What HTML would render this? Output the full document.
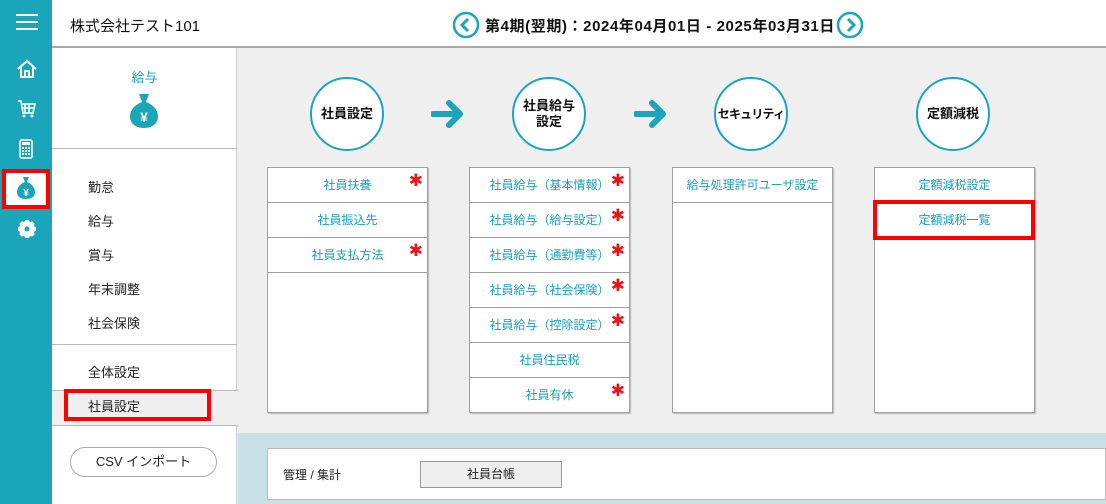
<!DOCTYPE html>
<html><head><meta charset="utf-8"><style>
*{box-sizing:border-box;margin:0;padding:0}
body{width:1106px;height:504px;overflow:hidden;background:#efefef;font-family:"Liberation Sans","Noto Sans CJK JP",sans-serif;position:relative;font-size:13px;color:#222}
.a{position:absolute}
#side{left:0;top:0;width:52px;height:504px;background:#1aa5ba}
#hdr{left:52px;top:0;width:1054px;height:48px;background:#fff;border-bottom:2px solid #a8a8a8}
#left{left:52px;top:48px;width:185px;height:456px;background:#fff;border-right:1px solid #ccc}
.mi{position:absolute;left:36px;font-size:13px;color:#222}
.circ{position:absolute;width:74px;height:74px;border:2px solid #1aa5ba;border-radius:50%;background:#fff;display:flex;align-items:center;justify-content:center;text-align:center;font-weight:bold;font-size:13px;line-height:16px;color:#111;white-space:nowrap}
.box{position:absolute;top:167px;width:161px;height:246px;background:#fff;border:1px solid #a0a0a0;box-shadow:1px 1px 1px #bbb}
.row{height:35px;border-bottom:1px solid #a0a0a0;color:#1aa0b8;font-size:12px;text-align:center;line-height:34px;position:relative}
.st{position:absolute;right:4px;top:-4px;color:#e8141a;font-size:17px;font-family:"DejaVu Sans",sans-serif}
.arr{position:absolute;top:98px}
</style></head><body>
<div id="side" class="a">
 <svg class="a" style="left:16px;top:13px" width="22" height="18"><g stroke="#fff" stroke-width="2"><line x1="0" y1="2" x2="22" y2="2"/><line x1="0" y1="9" x2="22" y2="9"/><line x1="0" y1="16" x2="22" y2="16"/></g></svg>
 <svg class="a" style="left:16px;top:59px" width="22" height="20"><path d="M2 10 L11 2 L20 10 M5 8 V18 H17 V8 M9 18 V12 H13 V18" fill="none" stroke="#fff" stroke-width="2"/></svg>
 <svg class="a" style="left:17px;top:99px" width="20" height="20"><path d="M1 2 H4 L6 14 H16 L18 5 H5 M8 5 V14 M12 5 V14 M5 9 H17" fill="none" stroke="#fff" stroke-width="1.6"/><circle cx="7" cy="17" r="1.5" fill="#fff"/><circle cx="15" cy="17" r="1.5" fill="#fff"/></svg>
 <svg class="a" style="left:19px;top:139px" width="14" height="20"><rect x="1" y="1" width="12" height="18" rx="1.5" fill="none" stroke="#fff" stroke-width="1.5"/><rect x="3" y="3" width="8" height="3" fill="#fff"/><g fill="#fff"><rect x="3" y="8" width="2" height="2"/><rect x="6" y="8" width="2" height="2"/><rect x="9" y="8" width="2" height="2"/><rect x="3" y="11" width="2" height="2"/><rect x="6" y="11" width="2" height="2"/><rect x="9" y="11" width="2" height="2"/><rect x="3" y="14" width="2" height="2"/><rect x="6" y="14" width="2" height="2"/><rect x="9" y="14" width="2" height="2"/></g></svg>
 <div class="a" style="left:2px;top:169px;width:48px;height:40px;background:#fff;border:4px solid #f00"></div>
 <svg class="a" style="left:16px;top:176px" width="20" height="24"><path d="M7 1 H13 L11 6 C17 8 19 13 19 16 C19 21 15 23 10 23 C5 23 1 21 1 16 C1 13 3 8 9 6 Z" fill="#1aa5ba"/><text x="10" y="20" fill="#fff" font-size="10" font-weight="bold" text-anchor="middle" font-family="Liberation Sans">¥</text></svg>
 <svg class="a" style="left:17px;top:219px" width="20" height="20" viewBox="0 0 20 20"><circle cx="10" cy="10" r="6" fill="none" stroke="#fff" stroke-width="4"/><g stroke="#fff" stroke-width="4"><line x1="10" y1="1" x2="10" y2="19"/><line x1="1" y1="10" x2="19" y2="10"/><line x1="3.6" y1="3.6" x2="16.4" y2="16.4"/><line x1="16.4" y1="3.6" x2="3.6" y2="16.4"/></g><circle cx="10" cy="10" r="2.5" fill="#1aa5ba"/></svg>
</div>
<div id="hdr" class="a">
 <div class="a" style="left:18px;top:15px;font-size:15px;color:#111">株式会社テスト101</div>
 <svg class="a" style="left:400px;top:11px" width="28" height="28"><circle cx="14" cy="14" r="12" fill="#fff" stroke="#1aa5ba" stroke-width="2.5"/><path d="M16 8 L10 14 L16 20" fill="none" stroke="#1aa5ba" stroke-width="3"/></svg>
 <div class="a" style="left:433px;top:15px;font-size:15px;letter-spacing:0.6px;font-weight:bold;color:#111;white-space:nowrap">第4期(翌期)：2024年04月01日 - 2025年03月31日</div>
 <svg class="a" style="left:784px;top:11px" width="28" height="28"><circle cx="14" cy="14" r="12" fill="#fff" stroke="#1aa5ba" stroke-width="2.5"/><path d="M12 8 L18 14 L12 20" fill="none" stroke="#1aa5ba" stroke-width="3"/></svg>
</div>
<div id="left" class="a">
 <div class="a" style="left:0;width:185px;top:19px;text-align:center;color:#1aa0b8;font-size:13px">給与</div>
 <svg class="a" style="left:77px;top:45px" width="30" height="36"><path d="M10 1 H20 L17 9 C25 12 29 18 29 23 C29 31 23 35 15 35 C7 35 1 31 1 23 C1 18 5 12 13 9 Z" fill="#1aa5ba"/><text x="15" y="29" fill="#fff" font-size="14" font-weight="bold" text-anchor="middle" font-family="Liberation Sans">¥</text></svg>
 <div class="a" style="left:0;top:100px;width:185px;border-top:1px solid #bbb"></div>
 <div class="mi" style="top:129px">勤怠</div>
 <div class="mi" style="top:163px">給与</div>
 <div class="mi" style="top:197px">賞与</div>
 <div class="mi" style="top:231px">年末調整</div>
 <div class="mi" style="top:265px">社会保険</div>
 <div class="a" style="left:0;top:296px;width:185px;border-top:1px solid #bbb"></div>
 <div class="mi" style="top:314px">全体設定</div>
 <div class="a" style="left:0;top:342px;width:186px;height:36px;background:#efefef;border-top:1px solid #bbb;border-bottom:1px solid #bbb"></div>
 <div class="a" style="left:12px;top:341px;width:147px;height:32px;border:4px solid #f00"></div>
 <div class="mi" style="top:348px">社員設定</div>
 <div class="a" style="left:18px;top:399px;width:147px;height:30px;border:1px solid #aaa;border-radius:15px;text-align:center;line-height:28px;font-size:13px">CSV インポート</div>
</div>
<div class="circ" style="left:310px;top:77px">社員設定</div>
<div class="circ" style="left:512px;top:77px">社員給与<br>設定</div>
<div class="circ" style="left:714px;top:77px;font-size:12px;letter-spacing:-0.8px">セキュリティ</div>
<div class="circ" style="left:916px;top:77px">定額減税</div>
<svg class="arr" style="left:431px" width="34" height="32"><path d="M2 16 H28 M18 5 L29 16 L18 27" fill="none" stroke="#1aa5ba" stroke-width="6" stroke-linecap="round" stroke-linejoin="round"/></svg>
<svg class="arr" style="left:634px" width="34" height="32"><path d="M2 16 H28 M18 5 L29 16 L18 27" fill="none" stroke="#1aa5ba" stroke-width="6" stroke-linecap="round" stroke-linejoin="round"/></svg>
<div class="box" style="left:267px">
 <div class="row">社員扶養<span class="st">✱</span></div>
 <div class="row">社員振込先</div>
 <div class="row">社員支払方法<span class="st">✱</span></div>
</div>
<div class="box" style="left:469px">
 <div class="row">社員給与（基本情報）<span class="st">✱</span></div>
 <div class="row">社員給与（給与設定）<span class="st">✱</span></div>
 <div class="row">社員給与（通勤費等）<span class="st">✱</span></div>
 <div class="row">社員給与（社会保険）<span class="st">✱</span></div>
 <div class="row">社員給与（控除設定）<span class="st">✱</span></div>
 <div class="row">社員住民税</div>
 <div class="row" style="border-bottom:none">社員有休<span class="st">✱</span></div>
</div>
<div class="box" style="left:672px">
 <div class="row">給与処理許可ユーザ設定</div>
</div>
<div class="box" style="left:874px">
 <div class="row">定額減税設定</div>
 <div class="row">定額減税一覧</div>
</div>
<div class="a" style="left:873px;top:200px;width:162px;height:40px;border:4px solid #f00"></div>
<div class="a" style="left:238px;top:433px;width:868px;height:71px;background:#c7e1e6"></div>
<div class="a" style="left:267px;top:448px;width:839px;height:52px;background:#fff;border:1px solid #bbb">
 <div class="a" style="left:15px;top:17px;font-size:12px">管理 / 集計</div>
 <div class="a" style="left:152px;top:12px;width:142px;height:27px;background:#efefef;border:1px solid #999;text-align:center;line-height:25px;font-size:12px">社員台帳</div>
</div>
</body></html>
